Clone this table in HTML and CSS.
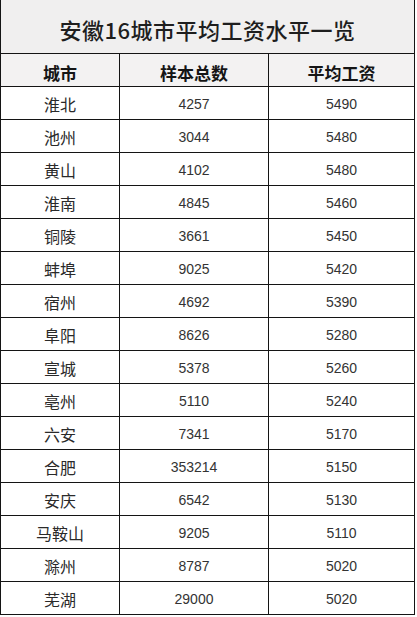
FILE: index.html
```html
<!DOCTYPE html>
<html lang="zh-CN">
<head>
<meta charset="utf-8">
<title>安徽16城市平均工资水平一览</title>
<link rel="stylesheet" href="styles.css">
</head>
<body>
<div class="table">
  <div class="title">安徽16城市平均工资水平一览</div>
  <div class="cell head">城市</div>
  <div class="cell head">样本总数</div>
  <div class="cell head">平均工资</div>

  <div class="cell city">淮北</div><div class="cell num">4257</div><div class="cell num">5490</div>
  <div class="cell city">池州</div><div class="cell num">3044</div><div class="cell num">5480</div>
  <div class="cell city">黄山</div><div class="cell num">4102</div><div class="cell num">5480</div>
  <div class="cell city">淮南</div><div class="cell num">4845</div><div class="cell num">5460</div>
  <div class="cell city">铜陵</div><div class="cell num">3661</div><div class="cell num">5450</div>
  <div class="cell city">蚌埠</div><div class="cell num">9025</div><div class="cell num">5420</div>
  <div class="cell city">宿州</div><div class="cell num">4692</div><div class="cell num">5390</div>
  <div class="cell city">阜阳</div><div class="cell num">8626</div><div class="cell num">5280</div>
  <div class="cell city">宣城</div><div class="cell num">5378</div><div class="cell num">5260</div>
  <div class="cell city">亳州</div><div class="cell num">5110</div><div class="cell num">5240</div>
  <div class="cell city">六安</div><div class="cell num">7341</div><div class="cell num">5170</div>
  <div class="cell city">合肥</div><div class="cell num">353214</div><div class="cell num">5150</div>
  <div class="cell city">安庆</div><div class="cell num">6542</div><div class="cell num">5130</div>
  <div class="cell city">马鞍山</div><div class="cell num">9205</div><div class="cell num">5110</div>
  <div class="cell city">滁州</div><div class="cell num">8787</div><div class="cell num">5020</div>
  <div class="cell city">芜湖</div><div class="cell num">29000</div><div class="cell num">5020</div>
</div>
</body>
</html>
```

FILE: styles.css
```css
html, body {
  margin: 0;
  padding: 0;
  background: #ffffff;
}

.table {
  display: grid;
  grid-template-columns: 118px 148px 145px;
  grid-template-rows: 53px repeat(17, 32px);
  gap: 1px;
  width: 413px;
  background: #141414;
  border: 1px solid #141414;
  border-top: none;
  font-family: "Liberation Sans", "Noto Sans CJK SC", sans-serif;
  color: #2a2a2a;
}

.title {
  grid-column: 1 / 4;
  background: #f0efef;
  display: flex;
  align-items: center;
  justify-content: center;
  padding-top: 5px;
  box-sizing: border-box;
  font-family: "Noto Sans CJK SC", sans-serif;
  font-size: 22px;
  font-weight: 500;
  letter-spacing: 0.5px;
  color: #1e1e1e;
}

.cell {
  display: flex;
  align-items: center;
  justify-content: center;
  background: #ffffff;
  font-size: 15px;
  padding-top: 2px;
  box-sizing: border-box;
}

.head {
  background: #f3f2f2;
  font-family: "Noto Sans CJK SC", sans-serif;
  font-weight: 700;
  font-size: 17px;
  color: #151515;
  padding-top: 4px;
}

.city {
  font-family: "Noto Sans CJK SC", sans-serif;
  font-weight: 400;
  font-size: 16px;
  color: #2a2a2a;
}

.num {
  font-size: 14px;
  color: #333333;
}
```
